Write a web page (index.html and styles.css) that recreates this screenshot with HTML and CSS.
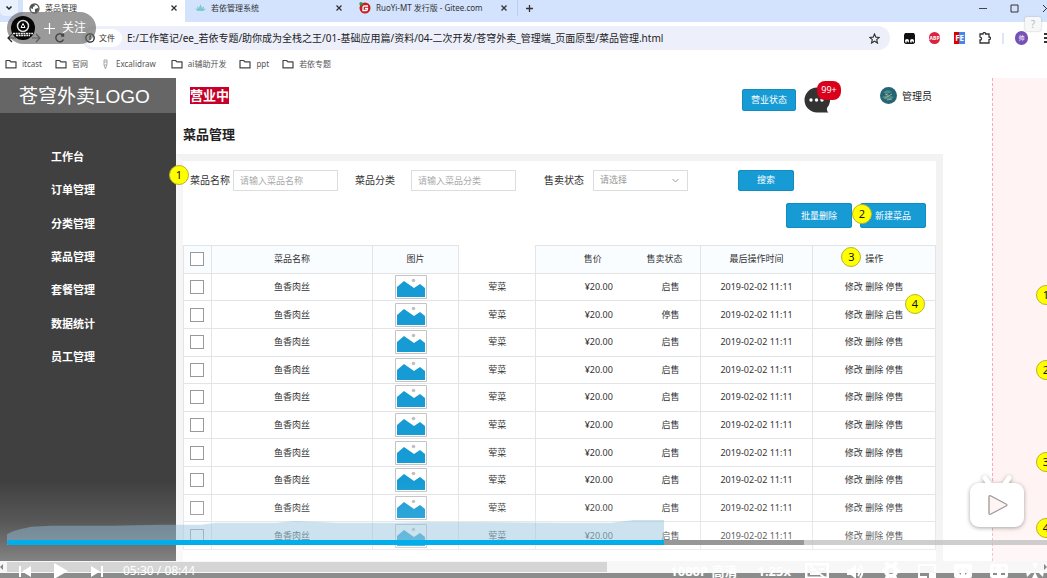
FILE: index.html
```html
<!DOCTYPE html>
<html lang="zh-CN">
<head>
<meta charset="utf-8">
<title>菜品管理</title>
<link rel="stylesheet" href="styles.css">
</head>
<body>
<svg class="defs" aria-hidden="true">
  <symbol id="folder" viewBox="0 0 12 10"><path d="M1 1.5h3.6l1.3 1.4H11v6H1z" fill="none" stroke="#444" stroke-width="1.2" stroke-linejoin="round"/></symbol>
  <symbol id="close" viewBox="0 0 8 8"><path d="M1.5 1.5l5 5M6.5 1.5l-5 5" stroke="#333" stroke-width="1.3"/></symbol>
  <symbol id="dish" viewBox="0 0 32 24"><path d="M.5.5h31v23H.5z" fill="#fff" stroke="#c4c4c4"/><path d="M2 22V12l7-6 10 7 6-4 5 4v9z" fill="#169bd5"/><circle cx="18.500" cy="5.500" r="1.800" fill="#c0c0c0"/></symbol>
</svg>

<header class="browser">
  <div class="tabs">
    <button class="tab-list" aria-label="搜索标签页"><svg width="8" height="6" viewBox="0 0 8 6"><path d="M1.500 1.500L4 4l2.500-2.500" fill="none" stroke="#222" stroke-width="1.500"/></svg></button>
    <div class="tab active">
      <svg width="11" height="11" viewBox="0 0 11 11"><circle cx="5.500" cy="5.500" r="4.500" fill="#fff" stroke="#555" stroke-width="1.300"/><path d="M1 5l1-3 3-1 1 2-2 1v2zM6 6l3-1 1 1-2 3-2 1z" fill="#555"/></svg>
      <span>菜品管理</span>
      <button aria-label="关闭"><svg width="8" height="8"><use href="#close"/></svg></button>
    </div>
    <div class="tab second">
      <svg width="11" height="9" viewBox="0 0 11 9"><path d="M5.500 0L7 4l2-2-.5 3 2.500-.5L8.500 7h-6L0 4.500 2.500 5 2 2l2 2z" fill="#7fc9cf"/></svg>
      <span>若依管理系统</span>
      <button aria-label="关闭"><svg width="8" height="8"><use href="#close"/></svg></button>
    </div>
    <div class="tab third">
      <svg width="12" height="12" viewBox="0 0 12 12"><circle cx="6" cy="6" r="5.500" fill="#c71d23"/><path d="M9 4H5.500Q4 4 4 5.500V8.500H7.500Q8.500 8.500 8.500 6.500H6" fill="none" stroke="#fff" stroke-width="1.300"/><circle cx="2" cy="1.800" r="1.700" fill="#23a447"/></svg>
      <span>RuoYi-MT 发行版 - Gitee.com</span>
      <button aria-label="关闭"><svg width="8" height="8"><use href="#close"/></svg></button>
    </div>
    <button class="new-tab" aria-label="新标签页"><svg width="9" height="9" viewBox="0 0 9 9"><path d="M4.500 1v7M1 4.500h7" stroke="#333" stroke-width="1.300"/></svg></button>
    <div class="window-controls">
      <button aria-label="最小化"><svg width="8" height="9" viewBox="0 0 8 9"><path d="M0 4.500h8" stroke="#444"/></svg></button>
      <button aria-label="最大化"><svg width="9" height="9" viewBox="0 0 9 9"><path d="M1 1h7v7H1z" fill="none" stroke="#333"/></svg></button>
      <button aria-label="关闭窗口"><svg width="9" height="9" viewBox="0 0 9 9"><path d="M1 1l7 7M8 1L1 8" stroke="#333"/></svg></button>
    </div>
  </div>
  <div class="toolbar">
    <div class="nav">
      <button aria-label="后退"><svg width="10" height="10" viewBox="0 0 10 10"><path d="M9 5H1.500M5 1L1 5l4 4" fill="none" stroke="#222" stroke-width="1.200"/></svg></button>
      <button aria-label="前进"><svg width="10" height="10" viewBox="0 0 10 10"><path d="M1 5h7.500M5 1l4 4-4 4" fill="none" stroke="#555" stroke-width="1.200"/></svg></button>
      <button aria-label="刷新"><svg width="10" height="10" viewBox="0 0 10 10"><path d="M8.500 6.500A4 4 0 1 1 8 2.300M8.500.5V3H6" fill="none" stroke="#111" stroke-width="1.500"/></svg></button>
    </div>
    <div class="address">
      <span class="scheme"><svg width="10" height="10" viewBox="0 0 10 10"><circle cx="5" cy="5" r="4.200" fill="none" stroke="#222" stroke-width="1.300"/><path d="M5 2.500V7M5 2.800h1" stroke="#222" stroke-width="1.200"/></svg>文件</span>
      <span class="url">E:/工作笔记/ee_若依专题/助你成为全栈之王/01-基础应用篇/资料/04-二次开发/苍穹外卖_管理端_页面原型/菜品管理.html</span>
      <svg width="11" height="11" viewBox="0 0 12 12"><path d="M6 1l1.500 3.500 3.700.3-2.800 2.500.9 3.700L6 9l-3.300 2 .9-3.700L.8 4.800l3.700-.3z" fill="none" stroke="#333" stroke-width="1.200"/></svg>
    </div>
    <div class="extensions">
      <svg width="11" height="11" viewBox="0 0 11 11"><path d="M1 0h9l1 2v7.500q-1 1.500-2.500 1.500h-6Q1 11 0 9.500V2z" fill="#111"/><circle cx="3" cy="8" r="2" fill="#fff"/><circle cx="8" cy="8" r="2" fill="#fff"/><path d="M2.500 8.500h1.500v1.500H2.500zM7.500 8.500H9v1.500H7.500z" fill="#111"/></svg>
      <span class="abp">ABP</span>
      <span class="fe">FE</span>
      <svg width="12" height="12" viewBox="0 0 12 12"><path d="M1 2h3q0-1.500 1.300-1.500T6.600 2H10v3q1.500 0 1.500 1.300T10 7.600V11H1V8q1.500 0 1.500-1.400T1 5z" fill="none" stroke="#333" stroke-width="1.300"/></svg>
      <i class="divider"></i>
      <span class="profile">帅</span>
      <svg class="more" width="3" height="11" viewBox="0 0 3 11"><path d="M0 0h3v2H0zM0 4h3v2H0zM0 8h3v2H0z" fill="#333"/></svg>
    </div>
  </div>
  <nav class="bookmarks">
    <a href="#"><svg width="12" height="10"><use href="#folder"/></svg>itcast</a>
    <a href="#"><svg width="12" height="10"><use href="#folder"/></svg>官网</a>
    <a href="#" class="draw"><svg width="5" height="11" viewBox="0 0 5 11"><path d="M1 1h3v4L2.500 10 1 6zM1 3h3M1 6h3" fill="none" stroke="#aaa"/></svg>Excalidraw</a>
    <a href="#"><svg width="12" height="10"><use href="#folder"/></svg>ai辅助开发</a>
    <a href="#"><svg width="12" height="10"><use href="#folder"/></svg>ppt</a>
    <a href="#"><svg width="12" height="10"><use href="#folder"/></svg>若依专题</a>
  </nav>
</header>

<div class="page">
  <aside class="sidebar">
    <div class="logo">苍穹外卖LOGO</div>
    <nav class="menu">
      <a href="#">工作台</a><a href="#">订单管理</a><a href="#">分类管理</a><a href="#">菜品管理</a><a href="#">套餐管理</a><a href="#">数据统计</a><a href="#">员工管理</a>
    </nav>
  </aside>

  <main class="content">
    <div class="topbar">
      <strong class="open">营业中</strong>
      <button class="btn status">营业状态</button>
      <div class="messages">
        <svg width="26" height="26" viewBox="0 0 26 26"><path d="M13 .5A12.500 12.500 0 1 0 13 25.500h11.500q-2-1.500-1.500-4.500A12.500 12.500 0 0 0 13 .5z" fill="#333"/><circle cx="7" cy="13" r="1.700" fill="#fff"/><circle cx="12.500" cy="13" r="1.700" fill="#fff"/><circle cx="18" cy="13" r="1.700" fill="#fff"/></svg>
        <span class="count">99+</span>
      </div>
      <div class="user"><svg width="17" height="17" viewBox="0 0 17 17"><circle cx="8.500" cy="8.500" r="8.500" fill="#246575"/><path d="M3 5l5-2 4 2-5 2zM2 10l5-2 7 2-4 3-6-1z" fill="#438c91"/><path d="M5 11l7-4M5 7l3 1M7 13l5-1" stroke="#b0a574"/></svg>管理员</div>
    </div>
    <h1>菜品管理</h1>

    <section class="panel">
      <form class="filters">
        <i class="pin pin-1">1</i>
        <label for="name">菜品名称</label><input id="name" placeholder="请输入菜品名称">
        <label class="category" for="category">菜品分类</label><input id="category" placeholder="请输入菜品分类">
        <label class="sale" for="sale">售卖状态</label>
        <span class="select-box"><select id="sale"><option>请选择</option></select><svg width="7" height="5" viewBox="0 0 7 5"><path d="M.5 1l3 3 3-3" fill="none" stroke="#999"/></svg></span>
        <button class="btn search" type="button">搜索</button>
      </form>
      <div class="actions">
        <button class="btn">批量删除</button>
        <button class="btn">新建菜品</button>
        <i class="pin pin-2">2</i>
      </div>

      <table>
        <colgroup><col class="c-check"><col class="c-name"><col class="c-image"><col class="c-kind"><col class="c-price"><col class="c-state"><col class="c-time"><col class="c-ops"></colgroup>
        <tbody>
          <tr><th><input type="checkbox" aria-label="全选"></th><th>菜品名称</th><th>图片</th><th class="blank"></th><th class="price">售价</th><th>售卖状态</th><th>最后操作时间</th><th class="ops">操作<i class="pin pin-3">3</i></th></tr>
          <tr><td><input type="checkbox" aria-label="选择"></td><td>鱼香肉丝</td><td><svg width="32" height="24"><use href="#dish"/></svg></td><td>荤菜</td><td class="price">¥20.00</td><td>启售</td><td>2019-02-02 11:11</td><td><a href="#">修改</a> <a href="#">删除</a> <a href="#">停售</a></td></tr>
          <tr><td><input type="checkbox" aria-label="选择"></td><td>鱼香肉丝</td><td><svg width="32" height="24"><use href="#dish"/></svg></td><td>荤菜</td><td class="price">¥20.00</td><td>停售</td><td>2019-02-02 11:11</td><td class="ops"><a href="#">修改</a> <a href="#">删除</a> <a href="#">启售</a><i class="pin pin-4">4</i></td></tr>
          <tr><td><input type="checkbox" aria-label="选择"></td><td>鱼香肉丝</td><td><svg width="32" height="24"><use href="#dish"/></svg></td><td>荤菜</td><td class="price">¥20.00</td><td>启售</td><td>2019-02-02 11:11</td><td><a href="#">修改</a> <a href="#">删除</a> <a href="#">停售</a></td></tr>
          <tr><td><input type="checkbox" aria-label="选择"></td><td>鱼香肉丝</td><td><svg width="32" height="24"><use href="#dish"/></svg></td><td>荤菜</td><td class="price">¥20.00</td><td>启售</td><td>2019-02-02 11:11</td><td><a href="#">修改</a> <a href="#">删除</a> <a href="#">停售</a></td></tr>
          <tr><td><input type="checkbox" aria-label="选择"></td><td>鱼香肉丝</td><td><svg width="32" height="24"><use href="#dish"/></svg></td><td>荤菜</td><td class="price">¥20.00</td><td>启售</td><td>2019-02-02 11:11</td><td><a href="#">修改</a> <a href="#">删除</a> <a href="#">停售</a></td></tr>
          <tr><td><input type="checkbox" aria-label="选择"></td><td>鱼香肉丝</td><td><svg width="32" height="24"><use href="#dish"/></svg></td><td>荤菜</td><td class="price">¥20.00</td><td>启售</td><td>2019-02-02 11:11</td><td><a href="#">修改</a> <a href="#">删除</a> <a href="#">停售</a></td></tr>
          <tr><td><input type="checkbox" aria-label="选择"></td><td>鱼香肉丝</td><td><svg width="32" height="24"><use href="#dish"/></svg></td><td>荤菜</td><td class="price">¥20.00</td><td>启售</td><td>2019-02-02 11:11</td><td><a href="#">修改</a> <a href="#">删除</a> <a href="#">停售</a></td></tr>
          <tr><td><input type="checkbox" aria-label="选择"></td><td>鱼香肉丝</td><td><svg width="32" height="24"><use href="#dish"/></svg></td><td>荤菜</td><td class="price">¥20.00</td><td>启售</td><td>2019-02-02 11:11</td><td><a href="#">修改</a> <a href="#">删除</a> <a href="#">停售</a></td></tr>
          <tr><td><input type="checkbox" aria-label="选择"></td><td>鱼香肉丝</td><td><svg width="32" height="24"><use href="#dish"/></svg></td><td>荤菜</td><td class="price">¥20.00</td><td>启售</td><td>2019-02-02 11:11</td><td><a href="#">修改</a> <a href="#">删除</a> <a href="#">停售</a></td></tr>
          <tr><td><input type="checkbox" aria-label="选择"></td><td>鱼香肉丝</td><td><svg width="32" height="24"><use href="#dish"/></svg></td><td>荤菜</td><td class="price">¥20.00</td><td>启售</td><td>2019-02-02 11:11</td><td><a href="#">修改</a> <a href="#">删除</a> <a href="#">停售</a></td></tr>
        </tbody>
      </table>
    </section>
  </main>

  <aside class="notes">
    <i class="pin note-1">1</i><i class="pin note-2">2</i><i class="pin note-3">3</i><i class="pin note-4">4</i>
  </aside>
</div>
<div class="scrollbar"><span class="arrow-left"></span><span class="thumb"></span><span class="arrow-right"></span></div>
<div class="taskbar"></div>

<div class="follow">
  <svg width="24" height="24" viewBox="0 0 24 24"><circle cx="12" cy="12" r="12" fill="#050505"/><circle cx="12" cy="10" r="5.500" fill="none" stroke="#ddd" stroke-width="1.500"/><path d="M12 7.500l2 4h-4z" fill="none" stroke="#fff"/><path d="M2 17.500h20M5 19.500h14" stroke="#eee" stroke-width="1.500" stroke-dasharray="2 .6"/></svg>
  <svg width="11" height="11" viewBox="0 0 11 11"><path d="M5.500 0v11M0 5.500h11" stroke="#fff" stroke-width="1.200"/></svg>
  <button>关注</button>
</div>
<button class="help">?</button>

<div class="fade"></div>
<svg class="float-play" width="58" height="56" viewBox="0 0 58 56"><path d="M17 4l5 7M41 4l-5 7" stroke="#fff" stroke-width="5" stroke-linecap="round"/><rect x="2" y="9" width="54" height="44" rx="9" fill="#fff"/><path d="M21 23v16q0 2 2 1l15-8q2-1 0-2l-15-8q-2-1-2 1z" fill="#fff3f3" stroke="#999" stroke-width="1.300"/></svg>

<div class="player">
  <svg class="heat" viewBox="0 0 657 21" preserveAspectRatio="none"><path d="M0 21V15q6-4 12-5l12-3 20-1h60l50-1h40l15-2 60 0 20-2 40 2h60l30-1h50l80 1h55l30-4 20-1h30l3 1V21z" fill="#8fc3dd" fill-opacity=".46"/></svg>
  <div class="track"><span class="buffered"></span><span class="played"></span></div>
  <div class="controls">
    <button aria-label="上一个"><svg width="12" height="13" viewBox="0 0 12 13"><path d="M0 1h2v11H0zM12 1v11L3 6.500z" fill="#fff"/></svg></button>
    <button aria-label="播放"><svg width="16" height="18" viewBox="0 0 16 18"><path d="M1 1l14 8-14 8z" fill="#fff"/></svg></button>
    <button aria-label="下一个"><svg width="12" height="13" viewBox="0 0 12 13"><path d="M10 1h2v11h-2zM0 1l9 5.500L0 12z" fill="#fff"/></svg></button>
    <span class="clock">05:30 / 08:44</span>
    <button class="quality">1080P 高清</button>
    <button class="speed">1.25x</button>
    <div class="tools">
      <svg width="24" height="16" viewBox="0 0 24 16"><path d="M1 1h22v14H1z" fill="none" stroke="#fff" stroke-width="3"/><path d="M4 2l16 13M5 7h5M14 6h5M5 11h9" stroke="#fff" stroke-width="2"/></svg>
      <svg width="17" height="17" viewBox="0 0 17 17"><path d="M0 6h4l5-4v14l-5-4H0z" fill="#fff"/><path d="M11 5q3 4 0 8M13 2q5 7 0 13" fill="none" stroke="#fff" stroke-width="2"/></svg>
      <svg width="18" height="18" viewBox="0 0 18 18"><circle cx="9" cy="9" r="5" fill="none" stroke="#fff" stroke-width="4"/><path d="M4 0l2 4M14 0l-2 4M4 18l2-4M14 18l-2-4M0 9h4M14 9h4" stroke="#fff" stroke-width="4"/></svg>
      <svg width="18" height="16" viewBox="0 0 18 16"><path d="M9 14H1V2h16v7" fill="none" stroke="#fff" stroke-width="2"/><path d="M11 10h7v6h-7z" fill="#fff"/></svg>
      <svg width="18" height="16" viewBox="0 0 18 16"><path fill-rule="evenodd" d="M2 1h14q2 0 2 2v10q0 2-2 2H2q-2 0-2-2V3q0-2 2-2zM7 4L3 8l4 4V9.500L5.500 8 7 6.500zM11 4l4 4-4 4V9.500L12.500 8 11 6.500z" fill="#fff"/></svg>
      <svg width="18" height="16" viewBox="0 0 18 16"><path fill-rule="evenodd" d="M2 1h14q2 0 2 2v10q0 2-2 2H2q-2 0-2-2V3q0-2 2-2zM3 4v3h2V6h2V4zM11 4v2h2v1h2V4zM3 9v3h4v-2H5V9zM13 9v1h-2v2h4V9z" fill="#fff"/></svg>
      <svg width="18" height="18" viewBox="0 0 18 18"><path d="M6 1h6l-3 6zM7 9l-6 6-1-6zM11 9l6 6 1-6zM6 16l3-6 3 6z" fill="#fff"/></svg>
    </div>
  </div>
</div>
</body>
</html>
```
FILE: styles.css
```css
* { box-sizing: border-box; }
body {
  margin: 0;
  height: 100vh;
  overflow: hidden;
  position: relative;
  display: flex;
  flex-direction: column;
  background: #fff;
  color: #333;
  font: 9px/12px "Noto Sans", "Noto Sans CJK SC", sans-serif;
}
button, input, select { font: inherit; color: inherit; margin: 0; }
button { border: 0; padding: 0; background: none; }
a { color: inherit; text-decoration: none; }
svg { display: block; flex: none; }
i { font-style: normal; }
.defs { position: absolute; width: 0; height: 0; }

/* Browser chrome */
.browser { flex: none; font-size: 8px; }
.tabs { display: flex; align-items: center; height: 22px; padding-bottom: 6px; background: #d3e3fd; }
.tab-list { display: grid; place-items: center; width: 18px; height: 16px; margin-right: 5px; background: #e9f0fe; border-radius: 0 0 5px 5px; }
.tab { display: flex; align-items: center; gap: 5px; height: 16px; white-space: nowrap; }
.tab button { margin-left: auto; }
.tab.active { width: 162px; height: 22px; margin-bottom: -6px; padding: 0 7px 6px 6px; background: #fff; }
.tab.second { width: 170px; padding: 0 12px 0 10px; }
.tab.third { width: 163px; padding: 0 9px 0 4px; border-right: 1px solid #b5cef5; }
.new-tab { margin-left: 7px; }
.window-controls { display: flex; gap: 23px; margin-left: auto; margin-right: -4px; }
.toolbar { display: flex; align-items: center; height: 32px; padding: 0 0 0 7px; }
.nav { display: flex; gap: 14px; width: 75px; }
.address { flex: 1; display: flex; align-items: center; height: 24px; padding: 0 10px 0 3px; border-radius: 12px; background: #edf0fb; }
.scheme { display: flex; align-items: center; gap: 4px; height: 18px; width: 37px; border-radius: 9px; background: #fff; }
.url { flex: 1; margin-left: 5px; font-size: 10px; line-height: 14px; white-space: nowrap; color: #222; }
.extensions { display: flex; align-items: center; gap: 14px; width: 157px; padding-left: 14px; }
.abp { width: 12px; height: 12px; border-radius: 6px; background: #d92341; color: #fff; font-size: 5px; font-weight: bold; text-align: center; }
.fe { width: 12px; height: 12px; background: linear-gradient(90deg, #d00 50%, #4387e8 50%); color: #fff; font-weight: bold; text-align: center; }
.divider { width: 2px; height: 11px; margin: 0 -3px; background: #dce5fa; }
.profile { width: 14px; height: 14px; border-radius: 7px; background: #7550b5; color: #fff; font-size: 6px; line-height: 14px; text-align: center; }
.more { margin-left: 2px; }
.bookmarks { display: flex; align-items: center; height: 24px; padding: 0 5px 4px; gap: 13px; }
.bookmarks a { display: flex; align-items: center; gap: 5px; color: #555; }
.bookmarks .draw { gap: 8px; padding: 0 2px; }

/* Page frame */
.page { flex: 1; display: flex; min-height: 0; overflow: hidden; }
.sidebar { flex: none; width: 176px; background: #404040; color: #fff; }
.logo { height: 35px; padding-left: 19px; background: #666; font: 19px/37px "Liberation Sans", "Noto Sans CJK SC", sans-serif; }
.menu { display: grid; grid-auto-rows: 1fr; height: 234px; margin-top: 27px; padding-left: 51px; font-size: 11px; font-weight: bold; }
.menu a { display: flex; align-items: center; }
.content { flex: 1; min-width: 0; }
.topbar { display: flex; align-items: center; height: 43px; padding: 0 11px 0 14px; }
.open { margin: 0 auto 8px 0; background: #c7002a; color: #fff; font-size: 13px; line-height: 17px; }
.btn { height: 21px; border-radius: 3px; background: #169bd5; box-shadow: inset 0 0 0 1px #128bc0; color: #fff; }
.status { width: 54px; height: 22px; }
.messages { position: relative; margin: 0 50px 0 8px; }
.count { position: absolute; left: 13px; top: -6px; width: 24px; height: 19px; border-radius: 8px; background: #d9001b; color: #fff; line-height: 18px; text-align: center; }
.user { display: flex; align-items: center; gap: 5px; margin-bottom: 8px; font-size: 10px; color: #222; }
h1 { margin: 0; padding-left: 7px; font-size: 13px; line-height: 26px; height: 33px; color: #222; }
.panel { height: 420px; border: 7px solid #f2f2f2; border-left-color: #f6f6f6; border-bottom: 0; }

/* Filters and actions */
.filters { position: relative; display: flex; align-items: center; height: 38px; padding-left: 7px; font-size: 10px; }
.filters label { width: 40px; white-space: nowrap; margin-right: 3px; }
.filters input, .filters select { width: 105px; height: 21px; padding: 0 6px; border: 1px solid #ddd; border-radius: 0; background: #fff; font-size: 9px; color: #999; }
.filters input::placeholder { color: #aaa; }
.filters .category { margin-left: 17px; margin-right: 16px; }
.filters .sale { margin-left: 28px; margin-right: 9px; }
.select-box { position: relative; width: 95px; }
.select-box select { display: block; width: 100%; appearance: none; }
.select-box svg { position: absolute; right: 9px; top: 8px; }
.search { width: 56px; margin-left: 50px; font-size: 9px; }
.actions { position: relative; display: flex; justify-content: flex-end; gap: 8px; height: 46px; padding: 4px 10px 0 0; }
.actions .btn { width: 66px; height: 25px; }

/* Dish table */
table { width: 100%; height: 305px; border-collapse: collapse; table-layout: fixed; text-align: center; }
th { background: #fafdff; font-weight: normal; }
th, td { height: 27px; padding: 0; border: 1px solid #e2e4e6; }
td svg { margin: 0 auto; }
td:nth-child(3) { padding-right: 9px; }
th:nth-child(5), td:nth-child(5) { border-right: 0; }
th:nth-child(6), td:nth-child(6) { border-left: 0; }
td:nth-child(6) { padding-left: 12px; }
th.blank { background: #fff; border-top-color: #fff; border-left-color: #fff; }
th.price { padding-left: 20px; }
td.price { padding-left: 32px; }
.ops { position: relative; }
.c-check { width: 28px; }
.c-name { width: 21.400%; }
.c-image { width: 11.500%; }
.c-kind { width: 10.200%; }
.c-price { width: 12.500%; }
.c-state { width: 9.400%; }
.c-time { width: 15%; }
.c-ops { width: 16.300%; }
input[type="checkbox"] { appearance: none; display: block; width: 14px; height: 14px; margin: 0 0 0 6px; border: 1px solid #999; background: #fff; }

/* Numbered annotation pins */
.pin { position: absolute; z-index: 1; width: 20px; height: 20px; border: 1px solid #b5b52c; border-radius: 10px; background: #ff0; color: #111; font-size: 11px; line-height: 18px; text-align: center; }
.pin-1 { left: -14px; top: 4px; }
.pin-2 { right: 64px; top: 5px; }
.pin-3 { left: 28px; top: 1px; }
.pin-4 { right: 10px; top: -7px; }
.notes { position: relative; flex: none; width: 55px; margin-left: 49px; border-left: 1px dashed #f6a9b9; background: #fff3f3; }
.notes .pin { right: -9px; }
.note-1 { top: 207px; }
.note-2 { top: 282px; }
.note-3 { top: 374px; }
.note-4 { top: 440px; }

.scrollbar { flex: none; display: flex; align-items: center; height: 12px; background: #f7f7f7; }
.arrow-left { margin-right: 4px; border: 3px solid transparent; border-left: 0; border-right-color: #888; }
.arrow-right { margin-left: auto; border: 3px solid transparent; border-right: 0; border-left-color: #888; }
.thumb { width: 57.300%; height: 10px; background: #d5d5d5; }
.taskbar { flex: none; height: 5px; background: #8b8d8d; }

/* Video overlays */
.follow { position: absolute; left: 7px; top: 12px; display: flex; align-items: center; height: 32px; width: 89px; padding-left: 4px; border-radius: 16px; background: rgb(100 100 100 / 65%); }
.follow svg + svg { margin-left: 9px; }
.follow button { margin-left: 7px; color: #fff; font-size: 12px; }
.help { position: absolute; right: 6px; top: 17px; width: 16px; height: 14px; border-radius: 2px; background: #f7f7f7; box-shadow: 0 0 2px #aaa; color: #a9bdd0; font-size: 10px; }
.fade { position: absolute; inset: auto 0 17px 0; height: 80px; background: linear-gradient(rgb(255 255 255 / 0%), rgb(255 255 255 / 12%) 50%, rgb(255 255 255 / 35%)); }
.float-play { position: absolute; right: 21px; bottom: 48px; filter: drop-shadow(0 1px 2px rgb(0 0 0 / 35%)); }
.player { position: absolute; left: 0; right: 0; bottom: 0; height: 58px; padding-left: 7px; overflow: hidden; }
.heat { width: 63.200%; height: 20px; }
.track { position: relative; height: 5px; background: rgb(190 190 190 / 75%); }
.track span { position: absolute; left: 0; top: 0; height: 5px; }
.buffered { width: 76.600%; background: #979797; }
.played { width: 63.200%; background: #00aeec; border-radius: 2px 0 0 2px; }
.controls { display: flex; align-items: center; height: 20px; margin-top: 16px; padding: 0 3px 0 12px; color: #fff; font-size: 12px; line-height: 16px; white-space: nowrap; }
.controls button { color: #fff; }
.controls button + button { margin-left: 22px; }
.controls .clock { margin-left: 20px; margin-right: auto; }
.controls .quality, .controls .speed { font-size: 13px; font-weight: bold; }
.controls .quality + .speed { margin-left: 20px; }
.tools { display: flex; align-items: center; gap: 18px; margin-left: 14px; }
```
